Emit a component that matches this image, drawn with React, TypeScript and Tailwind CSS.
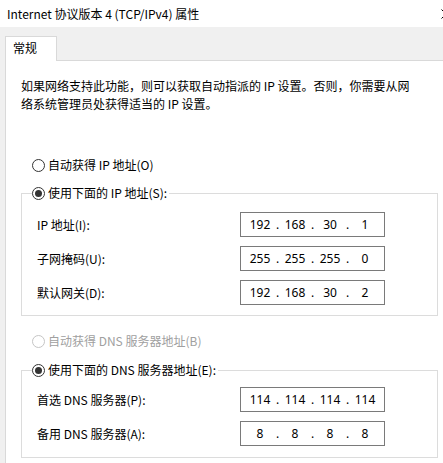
import React from "react";

const font = { fontFamily: '"Noto Sans CJK SC", "Noto Sans", sans-serif' };

function Radio({ checked, disabled }: { checked?: boolean; disabled?: boolean }) {
  return (
    <span
      className={
        "flex h-[13px] w-[13px] shrink-0 items-center justify-center rounded-full border bg-white " +
        (disabled ? "border-[#c5c5c5]" : "border-[#333333]")
      }
    >
      {checked && <span className="h-[7px] w-[7px] rounded-full bg-[#333333]" />}
    </span>
  );
}

function IpBox({ parts }: { parts: string[] }) {
  return (
    <div className="flex h-[25px] w-[145px] items-center border border-[#7a7a7a] bg-white pl-[5px] font-['Noto_Sans'] text-[12px] text-black">
      {parts.map((p, i) => (
        <React.Fragment key={i}>
          <span className="w-[28px] text-center">{p}</span>
          {i < 3 && <span className="w-[7px] text-center">.</span>}
        </React.Fragment>
      ))}
    </div>
  );
}

function Row({ label, parts }: { label: string; parts: string[] }) {
  return (
    <div className="flex h-[25px] items-center">
      <span className="w-[203px]">{label}</span>
      <IpBox parts={parts} />
    </div>
  );
}

export default function App() {
  return (
    <div
      className="h-[463px] w-[443px] overflow-hidden bg-white text-[12px] leading-[18px] text-black"
      style={font}
    >
      {/* title bar */}
      <div className="flex h-[27px] items-center justify-between bg-white pl-[7px]">
        <span>Internet 协议版本 4 (TCP/IPv4) 属性</span>
        <svg width="10" height="10" viewBox="0 0 10 10" className="-mr-[8px]">
          <path d="M0.5 0.5 L9.5 9.5 M9.5 0.5 L0.5 9.5" stroke="#000" strokeWidth="1" />
        </svg>
      </div>

      {/* tab strip */}
      <div className="flex h-[33px] items-end bg-[#f0f0f0] pl-[5px]">
        <div className="relative z-10 -mb-px flex h-[25px] w-[52px] items-start border-x border-t border-[#d9d9d9] bg-white pl-[7px] pt-[2px]">
          常规
        </div>
      </div>

      {/* panel */}
      <div className="flex bg-[#f0f0f0] pl-[5px]">
        <div className="h-[410px] flex-1 border-l border-t border-[#d9d9d9] bg-white pt-[16px]">
          <p className="pl-[15px]">
            如果网络支持此功能，则可以获取自动指派的 IP 设置。否则，你需要从网
            <br />
            络系统管理员处获得适当的 IP 设置。
          </p>

          <div className="ml-[15px] w-[417px]">
            <div className="mt-[43px] flex h-[18px] items-center gap-[3px] pl-[11px]">
              <Radio />
              <span>自动获得 IP 地址(O)</span>
            </div>

            <fieldset className="mt-[10px] border border-[#dcdcdc] px-[15px] pb-[10px]">
              <legend className="ml-[-5px] flex h-[18px] items-center gap-[3px] pr-[2px]">
                <Radio checked />
                <span>使用下面的 IP 地址(S):</span>
              </legend>
              <div className="flex flex-col gap-[9px] pt-[10px]">
                <Row label="IP 地址(I):" parts={["192", "168", "30", "1"]} />
                <Row label="子网掩码(U):" parts={["255", "255", "255", "0"]} />
                <Row label="默认网关(D):" parts={["192", "168", "30", "2"]} />
              </div>
            </fieldset>

            <div className="mt-[16px] flex h-[18px] items-center gap-[3px] pl-[11px] text-[#a0a0a0]">
              <Radio disabled />
              <span>自动获得 DNS 服务器地址(B)</span>
            </div>

            <fieldset className="mt-[11px] border border-[#dcdcdc] px-[15px] pb-[11px]">
              <legend className="ml-[-5px] flex h-[18px] items-center gap-[3px] pr-[2px]">
                <Radio checked />
                <span>使用下面的 DNS 服务器地址(E):</span>
              </legend>
              <div className="flex flex-col gap-[9px] pt-[8px]">
                <Row label="首选 DNS 服务器(P):" parts={["114", "114", "114", "114"]} />
                <Row label="备用 DNS 服务器(A):" parts={["8", "8", "8", "8"]} />
              </div>
            </fieldset>
          </div>
        </div>
      </div>
    </div>
  );
}
